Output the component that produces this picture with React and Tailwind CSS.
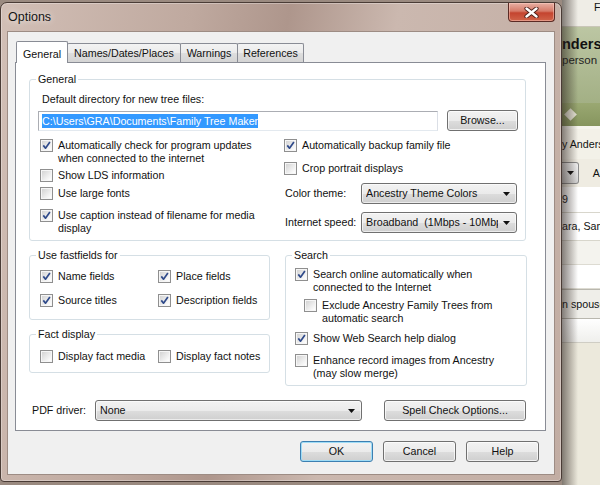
import React from 'react';

// Vista-style "Options" dialog sitting over another app window

function Check({ checked }) {
  return (
    <span className="w-[13px] h-[13px] shrink-0 border border-[#8f8f8f] bg-[#f6f6f6] p-[1px] flex">
      <span className="flex-1 bg-[linear-gradient(135deg,#d4d4d4_0%,#ececec_55%,#ffffff_100%)] flex items-center justify-center">
        {checked && (
          <svg width="9" height="9" viewBox="0 0 9 9">
            <path d="M1.3 4.4 L3.5 7.2 L7.9 1.1" fill="none" stroke="#2f4a8a" strokeWidth="1.7" strokeLinejoin="round" />
          </svg>
        )}
      </span>
    </span>
  );
}

function CheckItem({ checked, children, className = '' }) {
  return (
    <div className={`flex items-start gap-[5px] leading-[13px] ${className}`}>
      <Check checked={checked} />
      <span className="whitespace-nowrap">{children}</span>
    </div>
  );
}

function Combo({ children, className = '' }) {
  return (
    <div className={`h-[21px] rounded-[3px] border border-[#707070] bg-[linear-gradient(to_bottom,#f2f2f2_0%,#ebebeb_50%,#dddddd_51%,#cfcfcf_100%)] shadow-[inset_0_0_0_1px_rgba(255,255,255,0.6)] flex items-center pl-[4px] pr-[6px] ${className}`}>
      <span className="flex-1 overflow-hidden whitespace-pre">{children}</span>
      <svg className="ml-[5px] shrink-0" width="7" height="4" viewBox="0 0 7 4">
        <path d="M0 0H7L3.5 4Z" fill="#111" />
      </svg>
    </div>
  );
}

function Btn({ children, className = '', focused }) {
  return (
    <div
      className={`h-[21px] rounded-[3px] border flex items-center justify-center bg-[linear-gradient(to_bottom,#f2f2f2_0%,#ebebeb_50%,#dddddd_51%,#cfcfcf_100%)] ${
        focused
          ? 'border-[#3c7fb1] shadow-[inset_0_0_0_1px_#9fdcf6]'
          : 'border-[#707070] shadow-[inset_0_0_0_1px_rgba(255,255,255,0.7)]'
      } ${className}`}
    >
      {children}
    </div>
  );
}

function Group({ title, className = '', children }) {
  return (
    <fieldset className={`border border-[#d5dfe5] rounded-[3px] ${className}`}>
      <legend className="ml-[6px] px-[2px] leading-[13px]">{title}</legend>
      {children}
    </fieldset>
  );
}

function Tab({ children, selected, className = '' }) {
  if (selected) {
    return (
      <div className={`relative z-10 h-[22px] -mb-px bg-white border border-b-0 border-[#898c95] rounded-t-[2px] flex items-start justify-center pt-[4px] ${className}`}>
        {children}
      </div>
    );
  }
  return (
    <div className={`h-[19px] -ml-px border border-b-0 border-[#898c95] rounded-t-[2px] bg-[linear-gradient(to_bottom,#f3f3f3_0%,#ebebeb_50%,#dedede_51%,#d4d4d4_100%)] flex items-center justify-center ${className}`}>
      {children}
    </div>
  );
}

function CloseBtn() {
  return (
    <div className="w-[47px] h-[19px] rounded-b-[4px] border border-t-0 border-[#5b2a24] bg-[linear-gradient(to_bottom,#e8b0a4_0%,#d67a68_45%,#c4442f_55%,#d0644a_100%)] shadow-[inset_0_0_0_1px_rgba(255,215,205,0.45)] flex items-center justify-center">
      <svg width="15" height="11" viewBox="0 0 15 11">
        <path d="M2.5 1.5 L12.5 9.5 M12.5 1.5 L2.5 9.5" stroke="#4a1d16" strokeWidth="4.2" strokeLinecap="round" />
        <path d="M2.5 1.5 L12.5 9.5 M12.5 1.5 L2.5 9.5" stroke="#ffffff" strokeWidth="2.4" strokeLinecap="round" />
      </svg>
    </div>
  );
}

function GeneralPage() {
  return (
    <div className="w-[531px] h-[369px] shrink-0 border border-[#898c95] bg-white pl-[13px] pt-[10px]">
      {/* General */}
      <Group title="General" className="w-[497px] pb-[5px]">
        <div className="pl-[8px]">
          <div className="pl-[4px] mt-[7px] leading-[13px]">Default directory for new tree files:</div>
          <div className="mt-[4px] h-[21px] flex items-center">
            <div className="w-[400px] h-[20px] border border-[#abadb3] border-b-[#e3e9ef] border-r-[#dbdfe6] bg-white pl-[3px] flex items-center">
              <span className="bg-[#3399ff] text-white leading-[14px]">C:\Users\GRA\Documents\Family Tree Maker</span>
            </div>
            <Btn className="ml-[9px] w-[71px]">Browse...</Btn>
          </div>

          <div className="mt-[8px] pl-[2px] flex">
            <div className="w-[244px] shrink-0">
              <CheckItem checked>
                Automatically check for program updates
                <br />
                when connected to the internet
              </CheckItem>
              <CheckItem className="mt-[4px]">Show LDS information</CheckItem>
              <CheckItem className="mt-[5px]">Use large fonts</CheckItem>
              <CheckItem checked className="mt-[9px]">
                Use caption instead of filename for media
                <br />
                display
              </CheckItem>
            </div>
            <div>
              <CheckItem checked>Automatically backup family file</CheckItem>
              <CheckItem className="mt-[10px]">Crop portrait displays</CheckItem>
              <div className="mt-[8px] h-[21px] flex items-center">
                <span className="w-[77px] pl-[1px]">Color theme:</span>
                <Combo className="w-[156px]">Ancestry Theme Colors</Combo>
              </div>
              <div className="mt-[8px] h-[21px] flex items-center">
                <span className="w-[77px] pl-[1px]">Internet speed:</span>
                <Combo className="w-[156px]">Broadband  (1Mbps - 10Mbps)</Combo>
              </div>
            </div>
          </div>
        </div>
      </Group>

      <div className="mt-[8px] flex gap-[15px]">
        <div className="w-[241px] shrink-0">
          <Group title="Use fastfields for" className="pb-[12px]">
            <div className="pl-[10px]">
              <div className="mt-[8px] flex">
                <CheckItem checked className="w-[118px]">Name fields</CheckItem>
                <CheckItem checked>Place fields</CheckItem>
              </div>
              <div className="mt-[11px] flex">
                <CheckItem checked className="w-[118px]">Source titles</CheckItem>
                <CheckItem checked>Description fields</CheckItem>
              </div>
            </div>
          </Group>
          <Group title="Fact display" className="mt-[8px] pb-[9px]">
            <div className="pl-[10px] mt-[9px] flex">
              <CheckItem className="w-[118px]">Display fact media</CheckItem>
              <CheckItem>Display fact notes</CheckItem>
            </div>
          </Group>
        </div>

        <Group title="Search" className="w-[242px] pb-[5px]">
          <div className="pl-[9px]">
            <CheckItem checked className="mt-[6px]">
              Search online automatically when
              <br />
              connected to the Internet
            </CheckItem>
            <CheckItem className="mt-[5px] ml-[9px]">
              Exclude Ancestry Family Trees from
              <br />
              automatic search
            </CheckItem>
            <CheckItem checked className="mt-[7px]">Show Web Search help dialog</CheckItem>
            <CheckItem className="mt-[9px]">
              Enhance record images from Ancestry
              <br />
              (may slow merge)
            </CheckItem>
          </div>
        </Group>
      </div>

      <div className="mt-[14px] h-[21px] flex items-center">
        <span className="w-[66px] pl-[3px]">PDF driver:</span>
        <Combo className="w-[267px]">None</Combo>
        <Btn className="ml-[22px] w-[142px]">Spell Check Options...</Btn>
      </div>
    </div>
  );
}

function OptionsWindow() {
  return (
    <div className="w-[562px] h-[480px] mt-[2px] shrink-0 rounded-t-[7px] rounded-b-[4px] border border-[#4a3c36] bg-[linear-gradient(100deg,#d2bfb6_0%,#bfa99f_30%,#ae968c_45%,#cbb8af_62%,#c2ada3_100%)] shadow-[inset_0_0_0_1px_rgba(255,255,255,0.3)] flex flex-col px-[6px] pb-[6px]">
      <div className="h-[28px] shrink-0 flex items-start justify-between">
        <span className="pt-[7px] pl-[1px] leading-[15px] text-[12.5px] text-[#151515] [text-shadow:0_0_6px_rgba(255,255,255,0.9)]">
          Options
        </span>
        <CloseBtn />
      </div>

      <div className="flex-1 border border-[#9d8c84] bg-[#f0f0f0] pt-[9px] pl-[7px] flex flex-col">
        <div className="h-[21px] ml-[1px] flex items-end">
          <Tab selected className="w-[52px]">General</Tab>
          <Tab className="w-[114px]">Names/Dates/Places</Tab>
          <Tab className="w-[58px]">Warnings</Tab>
          <Tab className="w-[67px]">References</Tab>
        </div>
        <GeneralPage />
        <div className="mt-[10px] pr-[15px] flex justify-end gap-[10px]">
          <Btn focused className="w-[73px]">OK</Btn>
          <Btn className="w-[73px]">Cancel</Btn>
          <Btn className="w-[73px]">Help</Btn>
        </div>
      </div>
    </div>
  );
}

function BackgroundApp() {
  return (
    <div className="relative w-[38px] h-[485px] shrink-0 overflow-hidden bg-[#ece9dd] flex flex-col whitespace-nowrap">
      <div className="h-[27px] shrink-0 bg-[#efede6] border-b border-[#c9c6b8] pl-[32px] pt-[1px] leading-[13px]">F</div>
      <div className="h-[76px] shrink-0 bg-[linear-gradient(to_bottom,#bcc6a3,#a3b085)] pt-[9px]">
        <div className="font-bold text-[14.5px] leading-[16px]">nders</div>
        <div className="mt-[2px] text-[11.5px] leading-[13px] text-[#222]">person</div>
      </div>
      <div className="h-[26px] shrink-0 bg-[linear-gradient(to_bottom,#9aa872,#86955e)] border-b-[3px] border-[#f6f5ee] flex items-center pl-[4px]">
        <span className="w-[9px] h-[9px] rotate-45 bg-[#e8e6d8]" />
      </div>
      <div className="h-[30px] shrink-0 bg-[#f3f1e8] flex items-center leading-[13px]">y Anders</div>
      <div className="h-[28px] shrink-0 bg-[#efece2] flex items-center">
        <div className="w-[20px] h-[22px] rounded-r-[3px] border border-l-0 border-[#8a8a8a] bg-[linear-gradient(to_bottom,#f3f3f3,#d6d6d6)] flex items-center justify-end pr-[4px]">
          <svg width="7" height="4" viewBox="0 0 7 4">
            <path d="M0 0H7L3.5 4Z" fill="#111" />
          </svg>
        </div>
        <span className="ml-[14px]">A</span>
      </div>
      <div className="h-[26px] shrink-0 bg-white border-b border-[#d8d6cc] flex items-center">9</div>
      <div className="h-[28px] shrink-0 bg-white border-b border-[#d8d6cc] flex items-center">ara, Sam</div>
      <div className="h-[24px] shrink-0 bg-[#f4f3ee] border-b border-[#dddbd2]" />
      <div className="h-[24px] shrink-0 bg-white border-b border-[#dddbd2]" />
      <div className="h-[30px] shrink-0 bg-[#efeee9] border-y border-[#b9b7ae] flex items-center">n spouse</div>
      <div className="h-[24px] shrink-0 bg-[linear-gradient(to_bottom,#ffffff,#efefec)] border-b border-[#cfcdc4]" />
      <div className="flex-1 bg-[#ece9dc]" />
      <div className="absolute left-0 top-0 bottom-0 w-[16px] bg-[linear-gradient(to_right,rgba(40,30,25,0.55),rgba(40,30,25,0))]" />
    </div>
  );
}

export default function App() {
  return (
    <div className="w-[600px] h-[485px] overflow-hidden bg-[#9a8a80] flex font-['Liberation_Sans',Arial,sans-serif] text-[10.7px] text-[#111]">
      <OptionsWindow />
      <BackgroundApp />
    </div>
  );
}
